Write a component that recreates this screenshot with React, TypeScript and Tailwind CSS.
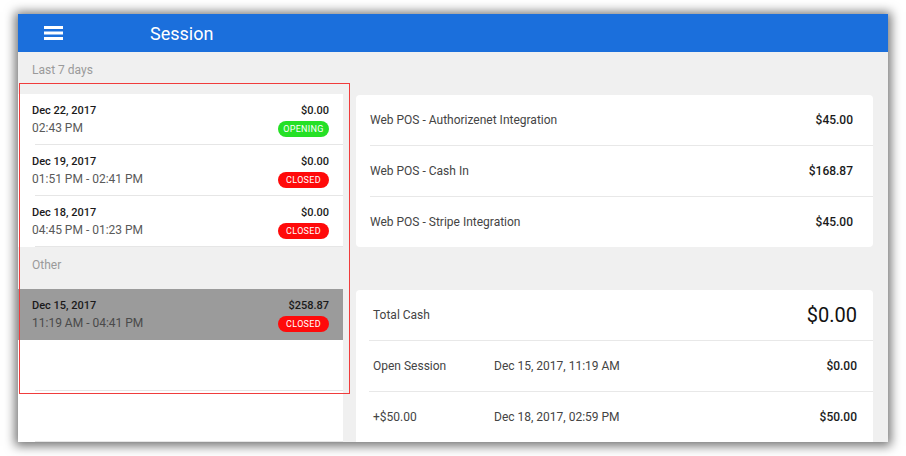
import React from "react";

const font = { fontFamily: "Roboto, 'Noto Sans', sans-serif" };

type Sess = { date: string; time: string; amount: string; status: "OPENING" | "CLOSED" };

const recent: Sess[] = [
  { date: "Dec 22, 2017", time: "02:43 PM", amount: "$0.00", status: "OPENING" },
  { date: "Dec 19, 2017", time: "01:51 PM - 02:41 PM", amount: "$0.00", status: "CLOSED" },
  { date: "Dec 18, 2017", time: "04:45 PM - 01:23 PM", amount: "$0.00", status: "CLOSED" },
];

function Badge({ status }: { status: Sess["status"] }) {
  return (
    <span
      className={
        "inline-flex h-[16px] w-[51px] items-center justify-center rounded-full text-[9px] leading-none tracking-[0.3px] text-white " +
        (status === "OPENING" ? "bg-[#25e025]" : "bg-[#ff0a0a]")
      }
    >
      {status}
    </span>
  );
}

function SessionRow({ s, selected }: { s: Sess; selected?: boolean }) {
  return (
    <div className={selected ? "bg-[#9b9b9b]" : "bg-white"}>
      <div className="flex h-[50px] items-start justify-between pl-[14px] pr-[14px] pt-[10px]">
        <div className="flex flex-col">
          <span className="text-[11px] font-medium leading-[14px] text-[#1a1a1a]">{s.date}</span>
          <span className={"mt-[3px] text-[12px] leading-[14px] " + (selected ? "text-[#4a4a4a]" : "text-[#5a5a5a]")}>
            {s.time}
          </span>
        </div>
        <div className="flex flex-col items-end">
          <span className="text-[11px] font-medium leading-[14px] text-[#1a1a1a]">{s.amount}</span>
          <span className="mt-[3px] flex">
            <Badge status={s.status} />
          </span>
        </div>
      </div>
      <div className={"ml-[17px] h-px " + (selected ? "bg-[#9b9b9b]" : "bg-[#e6e6e6]")} />
    </div>
  );
}

function EmptyRow() {
  return (
    <div className="bg-white">
      <div className="h-[50px]" />
      <div className="ml-[17px] h-px bg-[#e6e6e6]" />
    </div>
  );
}

function SectionHeader({ label }: { label: string }) {
  return (
    <div className="h-[42px] pl-[14px] pt-[11px] text-[12px] leading-[14px] text-[#9a9a9a]">{label}</div>
  );
}

const payments = [
  { label: "Web POS - Authorizenet Integration", value: "$45.00" },
  { label: "Web POS - Cash In", value: "$168.87" },
  { label: "Web POS - Stripe Integration", value: "$45.00" },
];

export default function App() {
  return (
    <div className="h-[456px] w-[906px] overflow-hidden bg-white pl-[18px] pt-[14px]" style={font}>
      <div className="relative flex h-[428px] w-[870px] flex-col overflow-hidden bg-[#f0f0f0] shadow-[0_1px_10px_3px_rgba(0,0,0,0.55)]">
        {/* Header */}
        <div className="flex h-[38px] shrink-0 items-center bg-[#1b6fdc]">
          <div className="ml-[26px] flex h-[14px] w-[20px] items-center">
            <svg width="20" height="14" viewBox="0 0 20 14">
              <rect x="0" y="0" width="19" height="3" fill="#fff" />
              <rect x="0" y="5.5" width="19" height="3" fill="#fff" />
              <rect x="0" y="11" width="19" height="3" fill="#fff" />
            </svg>
          </div>
          <span className="ml-[86px] mt-[2px] text-[18px] leading-none text-white">Session</span>
        </div>

        {/* Body */}
        <div className="flex min-h-0 flex-1">
          {/* Left list */}
          <div className="w-[325px] shrink-0">
            <SectionHeader label="Last 7 days" />
            {recent.map((s) => (
              <SessionRow key={s.date} s={s} />
            ))}
            <SectionHeader label="Other" />
            <SessionRow
              s={{ date: "Dec 15, 2017", time: "11:19 AM - 04:41 PM", amount: "$258.87", status: "CLOSED" }}
              selected
            />
            <EmptyRow />
            <EmptyRow />
          </div>

          {/* Right detail */}
          <div className="flex-1 pl-[13px] pr-[15px] pt-[43px]">
            <div className="overflow-hidden rounded-[4px] bg-white">
              {payments.map((p, i) => (
                <div key={p.label}>
                  {i > 0 && <div className="ml-[14px] h-px bg-[#e8e8e8]" />}
                  <div className="flex h-[50px] items-center justify-between pl-[14px] pr-[20px]">
                    <span className="text-[12px] text-[#444]">{p.label}</span>
                    <span className="text-[12px] font-medium text-[#1a1a1a]">{p.value}</span>
                  </div>
                </div>
              ))}
            </div>

            <div className="mt-[43px] overflow-hidden rounded-[4px] bg-white">
              <div className="flex h-[50px] items-center justify-between pl-[17px] pr-[16px]">
                <span className="text-[12px] text-[#444]">Total Cash</span>
                <span className="text-[20px] text-[#111]">$0.00</span>
              </div>
              <div className="ml-[13px] h-px bg-[#e8e8e8]" />
              <div className="flex h-[50px] items-center pl-[17px] pr-[16px]">
                <span className="w-[121px] text-[12px] text-[#444]">Open Session</span>
                <span className="flex-1 text-[12px] text-[#444]">Dec 15, 2017, 11:19 AM</span>
                <span className="text-[12px] font-medium text-[#1a1a1a]">$0.00</span>
              </div>
              <div className="ml-[13px] h-px bg-[#e8e8e8]" />
              <div className="flex h-[50px] items-center pl-[17px] pr-[16px]">
                <span className="w-[121px] text-[12px] text-[#444]">+$50.00</span>
                <span className="flex-1 text-[12px] text-[#444]">Dec 18, 2017, 02:59 PM</span>
                <span className="text-[12px] font-medium text-[#1a1a1a]">$50.00</span>
              </div>
              <div className="ml-[13px] h-px bg-[#e8e8e8]" />
              <div className="h-[50px]" />
            </div>
          </div>
        </div>

        {/* Red annotation box */}
        <div className="pointer-events-none absolute left-[1px] top-[69px] h-[311px] w-[331px] shadow-[inset_0_0_0_1px_#f03c3c]" />
      </div>
    </div>
  );
}
